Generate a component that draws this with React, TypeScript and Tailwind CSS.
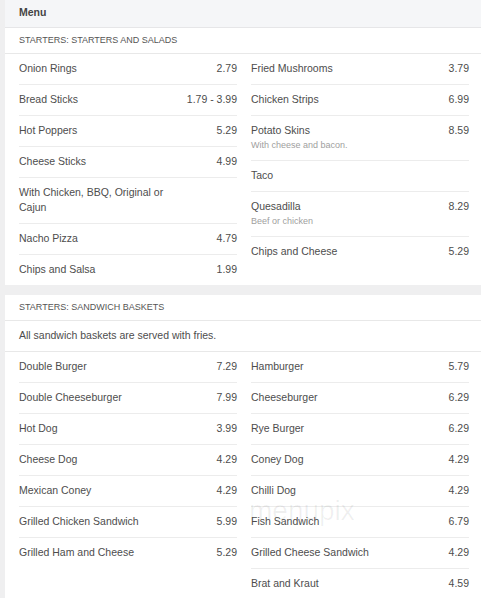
import React from 'react';

type Item = { name: string; price?: string; desc?: string };

const startersLeft: Item[] = [
  { name: 'Onion Rings', price: '2.79' },
  { name: 'Bread Sticks', price: '1.79 - 3.99' },
  { name: 'Hot Poppers', price: '5.29' },
  { name: 'Cheese Sticks', price: '4.99' },
  { name: 'With Chicken, BBQ, Original or Cajun' },
  { name: 'Nacho Pizza', price: '4.79' },
  { name: 'Chips and Salsa', price: '1.99' },
];

const startersRight: Item[] = [
  { name: 'Fried Mushrooms', price: '3.79' },
  { name: 'Chicken Strips', price: '6.99' },
  { name: 'Potato Skins', price: '8.59', desc: 'With cheese and bacon.' },
  { name: 'Taco' },
  { name: 'Quesadilla', price: '8.29', desc: 'Beef or chicken' },
  { name: 'Chips and Cheese', price: '5.29' },
];

const basketsLeft: Item[] = [
  { name: 'Double Burger', price: '7.29' },
  { name: 'Double Cheeseburger', price: '7.99' },
  { name: 'Hot Dog', price: '3.99' },
  { name: 'Cheese Dog', price: '4.29' },
  { name: 'Mexican Coney', price: '4.29' },
  { name: 'Grilled Chicken Sandwich', price: '5.99' },
  { name: 'Grilled Ham and Cheese', price: '5.29' },
];

const basketsRight: Item[] = [
  { name: 'Hamburger', price: '5.79' },
  { name: 'Cheeseburger', price: '6.29' },
  { name: 'Rye Burger', price: '6.29' },
  { name: 'Coney Dog', price: '4.29' },
  { name: 'Chilli Dog', price: '4.29' },
  { name: 'Fish Sandwich', price: '6.79' },
  { name: 'Grilled Cheese Sandwich', price: '4.29' },
  { name: 'Brat and Kraut', price: '4.59' },
];

function Column({ items }: { items: Item[] }) {
  return (
    <div className="flex flex-col">
      {items.map((it) => (
        <div key={it.name} className="flex pt-[7px] pb-[8px] border-b border-[#ececec] last:border-b-0">
          <div className="flex-1 min-w-0">
            <div className="text-[10.5px] leading-[15px] text-[#4d4d4d]">{it.name}</div>
            {it.desc && <div className="text-[9px] leading-[14px] text-[#a0a0a0]">{it.desc}</div>}
          </div>
          <div className="shrink-0 min-w-[56px] text-right text-[10.5px] leading-[15px] text-[#4d4d4d]">{it.price}</div>
        </div>
      ))}
    </div>
  );
}

function Section({ title, note, left, right }: { title: string; note?: string; left: Item[]; right: Item[] }) {
  return (
    <div className="bg-white">
      <div className="h-[26px] px-[14px] flex items-center border-b border-[#e8e8e8] text-[9px] text-[#555] uppercase">{title}</div>
      {note && (
        <div className="h-[31px] px-[14px] flex items-center border-b border-[#e8e8e8] text-[10.5px] text-[#4d4d4d]">{note}</div>
      )}
      <div className="grid grid-cols-[218px_218px] gap-x-[14px] pl-[14px] items-start">
        <Column items={left} />
        <Column items={right} />
      </div>
    </div>
  );
}

export default function App() {
  return (
    <div className="relative w-[481px] h-[598px] overflow-hidden bg-[#efeff0] pl-[5px] font-['Liberation_Sans',Arial,sans-serif]">
      <div className="h-[28px] bg-[#f5f6f8] border-b border-[#e6e6e8] px-[14px] pt-[5px] text-[10.5px] leading-[14px] font-bold text-[#444]">Menu</div>
      <Section title="Starters: Starters and Salads" left={startersLeft} right={startersRight} />
      <div className="h-[10px]" />
      <Section title="Starters: Sandwich Baskets" note="All sandwich baskets are served with fries." left={basketsLeft} right={basketsRight} />
      <span className="absolute left-[249px] top-[500px] text-[28px] leading-[22px] text-black/[0.06] pointer-events-none select-none">menupix</span>
    </div>
  );
}
